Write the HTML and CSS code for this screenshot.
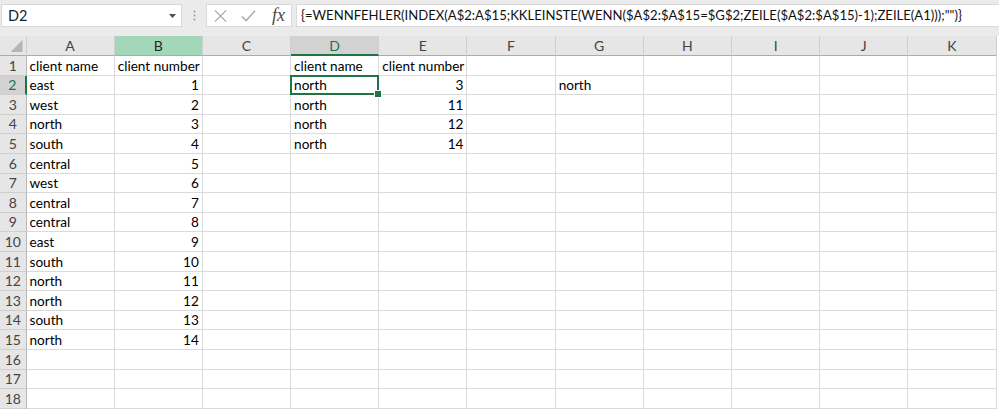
FILE: index.html
```html
<!DOCTYPE html>
<html>
<head>
<meta charset="utf-8">
<link rel="stylesheet" href="styles.css">
</head>
<body>
<div class="app">
  <div class="fbar">
    <div class="namebox">
      <span class="name">D2</span>
      <svg class="caret" width="7" height="4" viewBox="0 0 7 4"><path d="M0 0H7L3.5 4Z" fill="#505050"/></svg>
    </div>
    <div class="grip">
      <svg width="3" height="11" viewBox="0 0 3 11"><circle cx="1.5" cy="1.5" r="1" fill="#9a9a9a"/><circle cx="1.5" cy="5.5" r="1" fill="#9a9a9a"/><circle cx="1.5" cy="9.5" r="1" fill="#9a9a9a"/></svg>
    </div>
    <div class="btns">
      <svg class="ico" width="14" height="14" viewBox="0 0 14 14"><path d="M1 1L13 13M13 1L1 13" stroke="#a8a8a8" stroke-width="1.4" fill="none"/></svg>
      <svg class="ico" width="16" height="14" viewBox="0 0 16 14"><path d="M1 7.5L5.5 12L15 1.5" stroke="#a8a8a8" stroke-width="1.6" fill="none"/></svg>
      <span class="fx">fx</span>
    </div>
    <div class="formula">{=WENNFEHLER(INDEX(A$2:A$15;KKLEINSTE(WENN($A$2:$A$15=$G$2;ZEILE($A$2:$A$15)-1);ZEILE(A1)));"")}</div>
  </div>
  <div class="sheet">
    <div class="h corner"><span class="tri"></span></div>
    <div class="h col">A</div><div class="h col colB">B</div><div class="h col">C</div><div class="h col colD">D</div><div class="h col">E</div><div class="h col">F</div><div class="h col">G</div><div class="h col">H</div><div class="h col">I</div><div class="h col">J</div><div class="h col">K</div>

    <div class="h row">1</div><div class="c">client name</div><div class="c">client number</div><div class="c"></div><div class="c">client name</div><div class="c">client number</div><div class="c"></div><div class="c"></div><div class="c"></div><div class="c"></div><div class="c"></div><div class="c"></div>
    <div class="h row row2">2</div><div class="c">east</div><div class="c n">1</div><div class="c"></div><div class="c sel">north</div><div class="c n">3</div><div class="c"></div><div class="c">north</div><div class="c"></div><div class="c"></div><div class="c"></div><div class="c"></div>
    <div class="h row">3</div><div class="c">west</div><div class="c n">2</div><div class="c"></div><div class="c">north</div><div class="c n">11</div><div class="c"></div><div class="c"></div><div class="c"></div><div class="c"></div><div class="c"></div><div class="c"></div>
    <div class="h row">4</div><div class="c">north</div><div class="c n">3</div><div class="c"></div><div class="c">north</div><div class="c n">12</div><div class="c"></div><div class="c"></div><div class="c"></div><div class="c"></div><div class="c"></div><div class="c"></div>
    <div class="h row">5</div><div class="c">south</div><div class="c n">4</div><div class="c"></div><div class="c">north</div><div class="c n">14</div><div class="c"></div><div class="c"></div><div class="c"></div><div class="c"></div><div class="c"></div><div class="c"></div>
    <div class="h row">6</div><div class="c">central</div><div class="c n">5</div><div class="c"></div><div class="c"></div><div class="c"></div><div class="c"></div><div class="c"></div><div class="c"></div><div class="c"></div><div class="c"></div><div class="c"></div>
    <div class="h row">7</div><div class="c">west</div><div class="c n">6</div><div class="c"></div><div class="c"></div><div class="c"></div><div class="c"></div><div class="c"></div><div class="c"></div><div class="c"></div><div class="c"></div><div class="c"></div>
    <div class="h row">8</div><div class="c">central</div><div class="c n">7</div><div class="c"></div><div class="c"></div><div class="c"></div><div class="c"></div><div class="c"></div><div class="c"></div><div class="c"></div><div class="c"></div><div class="c"></div>
    <div class="h row">9</div><div class="c">central</div><div class="c n">8</div><div class="c"></div><div class="c"></div><div class="c"></div><div class="c"></div><div class="c"></div><div class="c"></div><div class="c"></div><div class="c"></div><div class="c"></div>
    <div class="h row">10</div><div class="c">east</div><div class="c n">9</div><div class="c"></div><div class="c"></div><div class="c"></div><div class="c"></div><div class="c"></div><div class="c"></div><div class="c"></div><div class="c"></div><div class="c"></div>
    <div class="h row">11</div><div class="c">south</div><div class="c n">10</div><div class="c"></div><div class="c"></div><div class="c"></div><div class="c"></div><div class="c"></div><div class="c"></div><div class="c"></div><div class="c"></div><div class="c"></div>
    <div class="h row">12</div><div class="c">north</div><div class="c n">11</div><div class="c"></div><div class="c"></div><div class="c"></div><div class="c"></div><div class="c"></div><div class="c"></div><div class="c"></div><div class="c"></div><div class="c"></div>
    <div class="h row">13</div><div class="c">north</div><div class="c n">12</div><div class="c"></div><div class="c"></div><div class="c"></div><div class="c"></div><div class="c"></div><div class="c"></div><div class="c"></div><div class="c"></div><div class="c"></div>
    <div class="h row">14</div><div class="c">south</div><div class="c n">13</div><div class="c"></div><div class="c"></div><div class="c"></div><div class="c"></div><div class="c"></div><div class="c"></div><div class="c"></div><div class="c"></div><div class="c"></div>
    <div class="h row">15</div><div class="c">north</div><div class="c n">14</div><div class="c"></div><div class="c"></div><div class="c"></div><div class="c"></div><div class="c"></div><div class="c"></div><div class="c"></div><div class="c"></div><div class="c"></div>
    <div class="h row">16</div><div class="c"></div><div class="c"></div><div class="c"></div><div class="c"></div><div class="c"></div><div class="c"></div><div class="c"></div><div class="c"></div><div class="c"></div><div class="c"></div><div class="c"></div>
    <div class="h row">17</div><div class="c"></div><div class="c"></div><div class="c"></div><div class="c"></div><div class="c"></div><div class="c"></div><div class="c"></div><div class="c"></div><div class="c"></div><div class="c"></div><div class="c"></div>
    <div class="h row">18</div><div class="c"></div><div class="c"></div><div class="c"></div><div class="c"></div><div class="c"></div><div class="c"></div><div class="c"></div><div class="c"></div><div class="c"></div><div class="c"></div><div class="c"></div>
  </div>
</div>
</body>
</html>
```

FILE: styles.css
```css
* { box-sizing: border-box; }
html, body { margin: 0; padding: 0; }
body {
  width: 999px;
  height: 412px;
  overflow: hidden;
  background: #ffffff;
  font-family: "Lato", "Liberation Sans", sans-serif;
  color: #000;
}
.app { display: flex; flex-direction: column; }

.fbar {
  height: 36px;
  background: #ebebeb;
  display: flex;
  align-items: flex-start;
  padding: 4px 0 0 1px;
}
.namebox {
  width: 181px;
  height: 23px;
  background: #fff;
  border: 1px solid #d9d9d9;
  display: flex;
  align-items: center;
  justify-content: space-between;
  padding: 0 5px 0 6px;
}
.name { font-size: 14.5px; color: #222; }
.caret { margin-top: 1px; }
.grip {
  width: 24px;
  height: 23px;
  display: flex;
  align-items: center;
  justify-content: center;
}
.btns {
  width: 86px;
  height: 23px;
  background: #fff;
  border: 1px solid #d9d9d9;
  display: flex;
  align-items: center;
  padding: 0 6px 0 7px;
  gap: 14px;
}
.fx {
  font-family: "Liberation Serif", serif;
  font-style: italic;
  font-size: 18px;
  color: #4a4a4a;
  margin-left: 2px;
}
.formula {
  flex: 1;
  height: 23px;
  margin-left: 4px;
  background: #fff;
  border: 1px solid #d9d9d9;
  border-right: none;
  font-size: 13.1px;
  line-height: 21px;
  padding-left: 4px;
  white-space: nowrap;
  overflow: hidden;
  color: #111;
}

.sheet {
  display: grid;
  grid-template-columns: 26.5px repeat(11, 88.2px);
  grid-template-rows: 20px repeat(18, 19.6px);
}
.c {
  border-right: 1px solid #dadada;
  border-bottom: 1px solid #dadada;
  display: flex;
  align-items: flex-end;
  padding: 0 3px 0 3px;
  font-size: 13.6px;
  line-height: 18px;
  white-space: nowrap;
}
.c.n { justify-content: flex-end; }

.h {
  background: #e6e6e6;
  color: #444;
  font-size: 14px;
  display: flex;
  align-items: center;
  justify-content: center;
}
.col {
  border-right: 1px solid #cfcfcf;
  border-bottom: 1px solid #ababab;
}
.corner {
  border-right: 1px solid #cfcfcf;
  border-bottom: 1px solid #ababab;
  position: relative;
}
.tri {
  position: absolute;
  right: 3px;
  bottom: 3px;
  width: 12px;
  height: 12px;
  background: #b6b6b6;
  clip-path: polygon(100% 0, 100% 100%, 0 100%);
}
.colB { background: #a3d7b9; color: #262626; }
.colD { background: #d2d2d2; color: #217346; border-bottom: 2px solid #217346; }
.row {
  border-right: 1px solid #b8b8b8;
  border-bottom: 1px solid #cfcfcf;
  align-items: flex-end;
  line-height: 18px;
}
.row2 { background: #d2d2d2; color: #217346; border-right: 2px solid #217346; }

.sel { position: relative; }
.sel::after {
  content: "";
  position: absolute;
  left: -1px;
  top: -1px;
  right: -1px;
  bottom: -1px;
  border: 2px solid #217346;
}
.sel::before {
  content: "";
  position: absolute;
  right: -4px;
  bottom: -4px;
  width: 6px;
  height: 6px;
  background: #217346;
  border: 1px solid #fff;
  z-index: 2;
}
```
